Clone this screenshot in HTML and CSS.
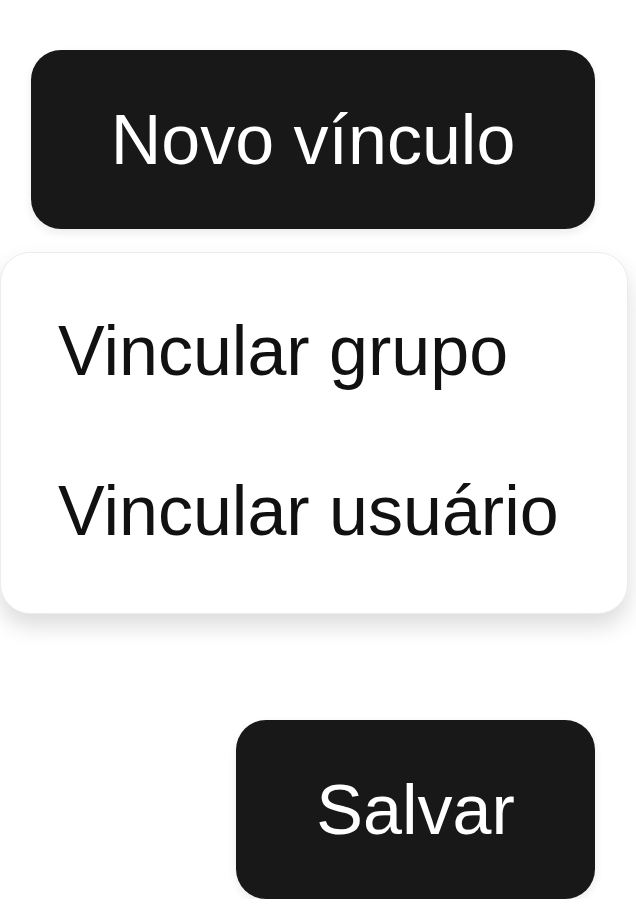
FILE: index.html
```html
<!DOCTYPE html>
<html lang="pt-BR">

<head>
    <meta charset="utf-8">
    <meta name="viewport" content="width=device-width, initial-scale=1.0">
    <title>Novo vínculo</title>
    <link rel="stylesheet" href="styles.css">
</head>

<body>
    <main class="painel">
        <button class="btn btn-novo">Novo vínculo</button>

        <ul class="menu">
            <li class="menu-item">Vincular grupo</li>
            <li class="menu-item">Vincular usuário</li>
        </ul>

        <div class="rodape">
            <button class="btn btn-salvar">Salvar</button>
        </div>
    </main>
</body>

</html>
```

FILE: styles.css
```css
* {
    box-sizing: border-box;
}

body {
    margin: 0;
    background-color: #ffffff;
    font-family: "Liberation Sans", Arial, sans-serif;
}

.painel {
    width: 636px;
    padding-top: 50px;
}

.btn {
    display: flex;
    align-items: center;
    justify-content: center;
    border: none;
    border-radius: 30px;
    background-color: #181818;
    color: #ffffff;
    font-family: "Liberation Sans", Arial, sans-serif;
    font-size: 70px;
    line-height: 1;
    padding: 0;
    cursor: pointer;
    box-shadow: 0 4px 10px rgba(0, 0, 0, 0.08);
}

.btn-novo {
    width: 564px;
    height: 179px;
    margin-left: 31px;
}

.menu {
    list-style: none;
    margin: 23px 0 0;
    padding: 18px 0 22px;
    width: 628px;
    background-color: #ffffff;
    border: 1px solid #ececec;
    border-radius: 30px;
    box-shadow: 0 12px 22px rgba(0, 0, 0, 0.14);
}

.menu-item {
    padding: 40px 57px;
    font-size: 70px;
    line-height: 80px;
    color: #111111;
    cursor: pointer;
}

.rodape {
    display: flex;
    justify-content: flex-end;
    padding-right: 41px;
    margin-top: 106px;
}

.btn-salvar {
    width: 359px;
    height: 179px;
}
```
